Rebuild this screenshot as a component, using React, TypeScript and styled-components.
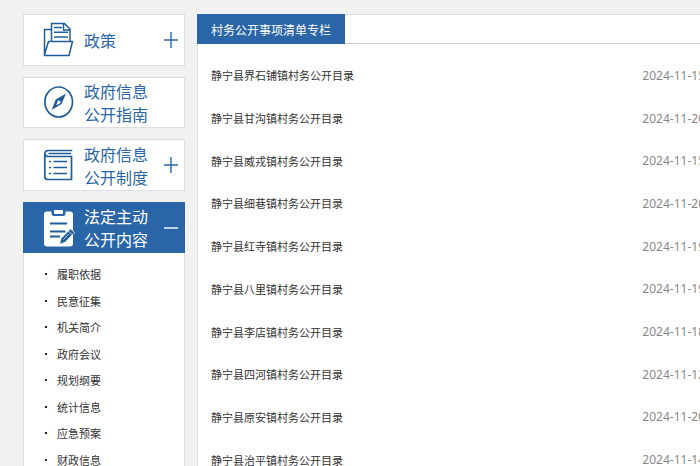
import React from "react";
import styled, { createGlobalStyle } from "styled-components";

const blue = "#2a65a7";
const iconBlue = "#1f5c99";
const line = "#dedede";

const GlobalStyle = createGlobalStyle`
  *, *::before, *::after { box-sizing: border-box; }
  html, body { margin: 0; background: #f1f1f1; }
  body {
    overflow: hidden;
    color: #333;
    font-family: "Noto Sans CJK SC", "Noto Sans", sans-serif;
    font-size: 11px;
  }
  ul { list-style: none; margin: 0; padding: 0; }
  a { color: inherit; text-decoration: none; }
`;

const Page = styled.div`
  display: flex;
  align-items: stretch;
  gap: 12px;
  min-height: 100vh;
  padding: 14px 0 0 23px;
`;

const Sidebar = styled.nav`
  display: flex;
  flex: 0 0 162px;
  flex-direction: column;
  gap: 11px;
`;

const Categories = styled.div`
  display: grid;
  grid-auto-rows: 1fr;
  gap: 11px;
  min-height: 177px;
`;

const Category = styled.button<{ $active?: boolean }>`
  display: flex;
  align-items: center;
  width: 100%;
  min-height: 51px;
  margin: 0;
  padding: 0 6px 0 19px;
  border: 1px solid ${(p) => (p.$active ? blue : line)};
  background: ${(p) => (p.$active ? blue : "#fff")};
  color: ${(p) => (p.$active ? "#fff" : blue)};
  font-family: inherit;
  font-size: 16px;
  line-height: 23px;
  text-align: left;
  cursor: pointer;
`;

const CategoryIcon = styled.svg`
  flex: none;
  width: 32px;
  height: 40px;
  margin-right: 9px;
`;

const CategoryLabel = styled.span`
  width: 64px;
  padding-top: 1px;
`;

const Toggle = styled.svg`
  width: 14px;
  height: 16px;
  margin-left: auto;
`;

const Group = styled.section`
  flex: 1 0 auto;
  border: solid ${line};
  border-width: 0 1px;
  background: #fff;
`;

const GroupHeader = styled.div`
  margin: 0 -1px;
`;

const SubMenu = styled.ul`
  display: grid;
  grid-auto-rows: 1fr;
  min-height: 212px;
  margin-top: 8px;
`;

const SubItem = styled.li`
  display: flex;
  align-items: center;
  gap: 10px;
  padding-left: 21px;

  &::before {
    content: "";
    width: 2px;
    height: 2px;
    background: #222;
  }
`;

const Main = styled.main`
  flex: 1 0 520px;
  border: 1px solid ${line};
  background: #fff;
`;

const TitleBar = styled.header`
  display: flex;
  margin: -1px 0 0 -1px;
  border-top: 1px solid ${line};
  box-shadow: inset 0 -1px #ccc;
`;

const Title = styled.h1`
  margin: -1px 0 0;
  padding: 1px 14px 0;
  background: ${blue};
  color: #fff;
  font-size: 12px;
  font-weight: 400;
  line-height: 29px;
`;

const Articles = styled.ul`
  display: grid;
  grid-auto-rows: 1fr;
  min-height: 427px;
  margin: 10px 0 20px;
`;

const Article = styled.li`
  display: flex;
  align-items: center;
  justify-content: space-between;
  padding: 0 11px 0 13px;
`;

const ArticleDate = styled.time`
  color: #888;
  font-family: "Noto Sans", sans-serif;
  font-size: 12px;
`;

const FolderIcon = () => (
  <CategoryIcon viewBox="0 0 32 40" fill="none" stroke={iconBlue} strokeWidth="1.5" aria-hidden>
    <path d="M8.500 21V3.500h13L27 9v12M20.500 3.500V10H27M11 7.500h8M11 12.300h14M11 17h14" />
    <path d="M8.500 9.500h-7v26H26l3.500-14H5.500l-4 13" strokeLinejoin="round" />
  </CategoryIcon>
);

const CompassIcon = () => (
  <CategoryIcon viewBox="0 0 32 40" aria-hidden>
    <ellipse cx="15.700" cy="20" rx="13.800" ry="15" fill="none" stroke={iconBlue} strokeWidth="1.7" />
    <path
      d="M23 11.500 18.500 22 8.700 28l4-10.500zM15.200 18.300l-2 5 3.800-1.800.6-2z"
      fill={iconBlue}
      fillRule="evenodd"
    />
  </CategoryIcon>
);

const BookIcon = () => (
  <CategoryIcon viewBox="0 0 32 40" fill="none" stroke={iconBlue} strokeWidth="1.7" aria-hidden>
    <path d="M29.300 5.500H5.500Q1.800 5.500 1.800 9v22.500q0 3 3 3h23.700v-23H5.500q-3.500 0-3.500-2.500M5.500 8.500h22.500" />
    <path d="M6 16.500h2M6 22.500h2M6 28.500h2M10.500 16.500h13.500M10.500 22.500h13.500M10.500 28.500h13.500" />
  </CategoryIcon>
);

const ClipboardIcon = () => (
  <CategoryIcon viewBox="0 0 32 40" fill="none" aria-hidden>
    <path
      d="M4 3.500h4.500V5.500q0 2.500 2.500 2.500h9q2.500 0 2.500-2.500V3.500H27q3 0 3 3v29q0 3-3 3H4q-3 0-3-3V6.500q0-3 3-3z"
      fill="currentColor"
    />
    <rect x="11" y="2" width="9" height="4" rx="1" fill="currentColor" />
    <path d="M7 15.500h17M7 23.500h15.500M7 28.500h10" stroke={iconBlue} strokeWidth="1.8" />
    <path
      d="M16.500 36.500 18 30.500 27.500 20.800l4 3.700-9.300 9.700z"
      fill={iconBlue}
      stroke="#fff"
      strokeWidth=".8"
    />
    <path d="M20.500 31.500 26 25.800M25.300 23l4 3.700" stroke="#fff" strokeWidth=".7" />
  </CategoryIcon>
);

const ToggleMark = ({ open }: { open?: boolean }) => (
  <Toggle viewBox="0 0 14 16" fill="none" stroke="currentColor" strokeWidth="1.4" aria-hidden>
    <path d={open ? "M0 8h14" : "M0 8h14M7 0v16"} />
  </Toggle>
);

const subItems = ["履职依据", "民意征集", "机关简介", "政府会议", "规划纲要", "统计信息", "应急预案", "财政信息"];

const articles = [
  ["静宁县界石铺镇村务公开目录", "2024-11-15"],
  ["静宁县甘沟镇村务公开目录", "2024-11-20"],
  ["静宁县威戎镇村务公开目录", "2024-11-15"],
  ["静宁县细巷镇村务公开目录", "2024-11-20"],
  ["静宁县红寺镇村务公开目录", "2024-11-19"],
  ["静宁县八里镇村务公开目录", "2024-11-19"],
  ["静宁县李店镇村务公开目录", "2024-11-18"],
  ["静宁县四河镇村务公开目录", "2024-11-12"],
  ["静宁县原安镇村务公开目录", "2024-11-20"],
  ["静宁县治平镇村务公开目录", "2024-11-14"],
];

export default function App() {
  return (
    <>
      <GlobalStyle />
      <Page>
        <Sidebar>
          <Categories>
            <Category type="button" aria-expanded={false}>
              <FolderIcon />
              <CategoryLabel>政策</CategoryLabel>
              <ToggleMark />
            </Category>
            <Category type="button">
              <CompassIcon />
              <CategoryLabel>政府信息公开指南</CategoryLabel>
            </Category>
            <Category type="button" aria-expanded={false}>
              <BookIcon />
              <CategoryLabel>政府信息公开制度</CategoryLabel>
              <ToggleMark />
            </Category>
          </Categories>
          <Group>
            <GroupHeader>
              <Category type="button" $active aria-expanded>
                <ClipboardIcon />
                <CategoryLabel>法定主动公开内容</CategoryLabel>
                <ToggleMark open />
              </Category>
            </GroupHeader>
            <SubMenu>
              {subItems.map((name) => (
                <SubItem key={name}>
                  <a href="#">{name}</a>
                </SubItem>
              ))}
            </SubMenu>
          </Group>
        </Sidebar>
        <Main>
          <TitleBar>
            <Title>村务公开事项清单专栏</Title>
          </TitleBar>
          <Articles>
            {articles.map(([name, date]) => (
              <Article key={name}>
                <a href="#">{name}</a>
                <ArticleDate dateTime={date}>{date}</ArticleDate>
              </Article>
            ))}
          </Articles>
        </Main>
      </Page>
    </>
  );
}
